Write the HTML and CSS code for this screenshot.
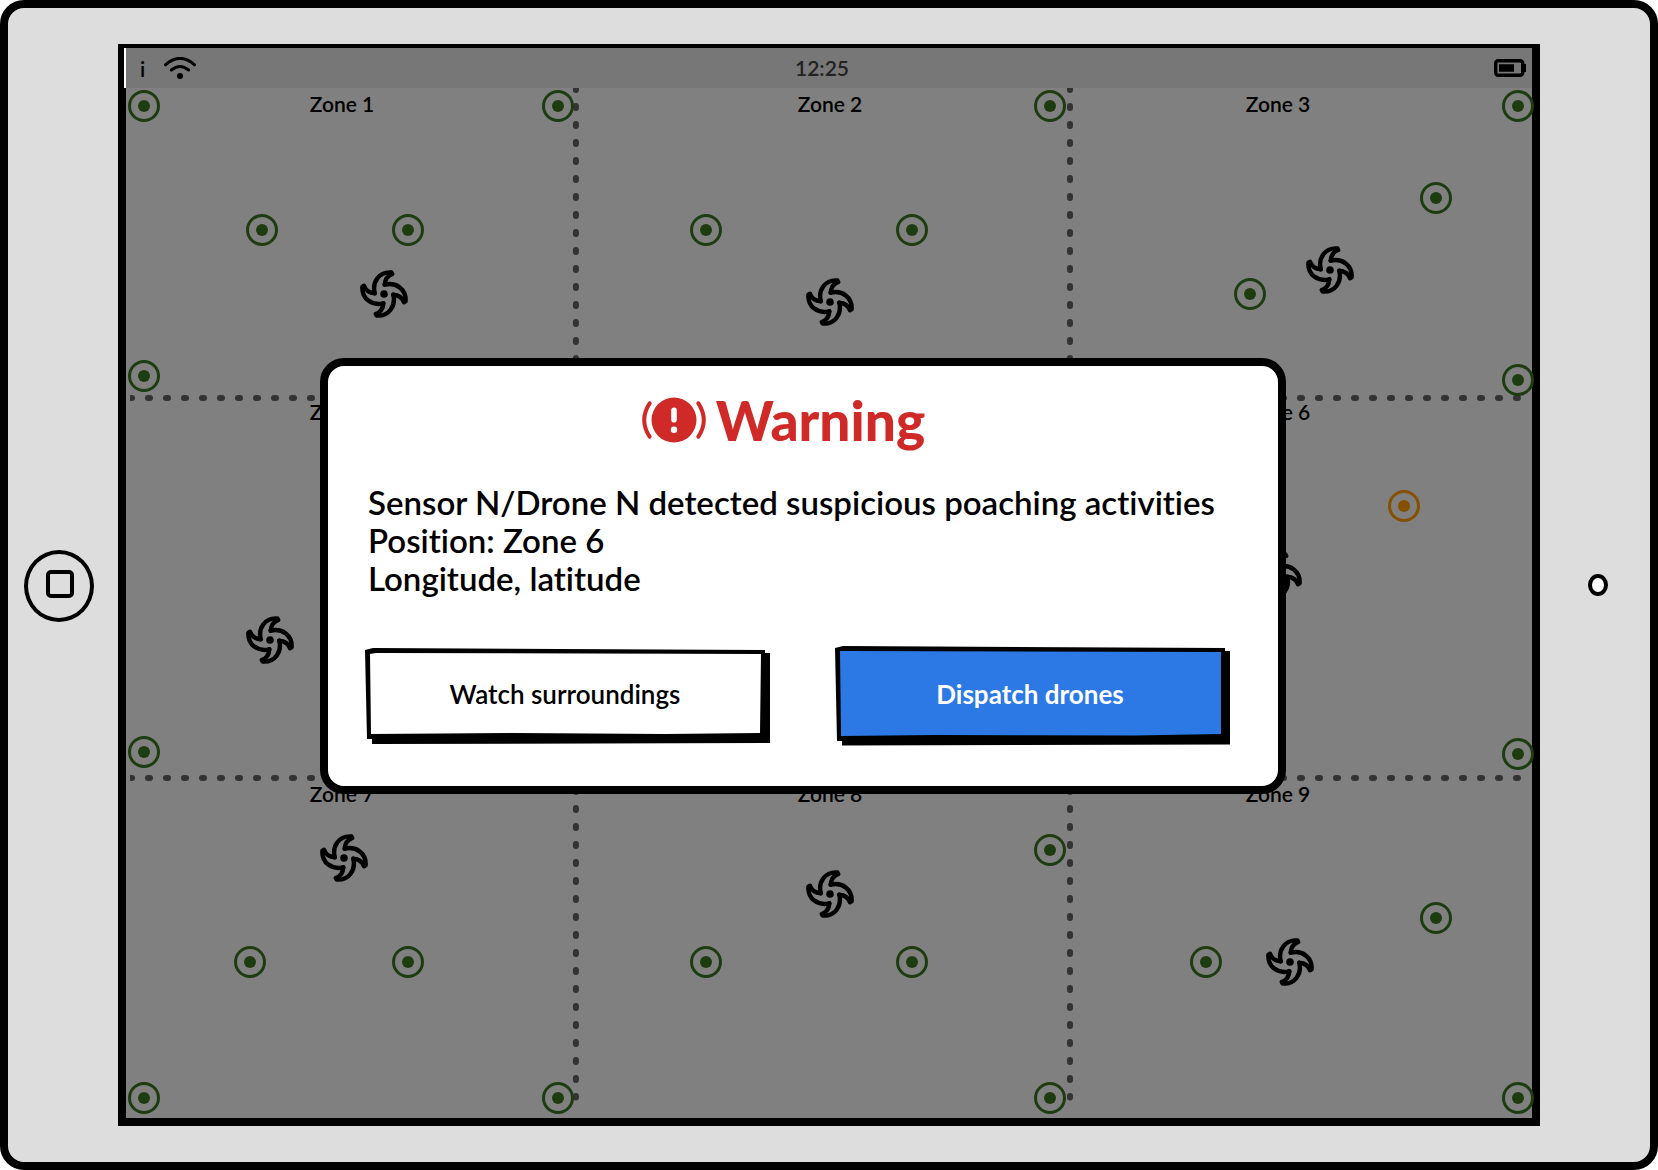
FILE: index.html
```html
<!DOCTYPE html>
<html lang="en">
<head>
<meta charset="utf-8">
<meta name="viewport" content="width=device-width, initial-scale=1">
<title>Drone monitoring – Warning</title>
<link rel="stylesheet" href="styles.css">
</head>
<body>
<svg class="symbols" aria-hidden="true">
  <symbol id="sensor" viewBox="0 0 32 32">
    <circle cx="16" cy="16" r="14.5" fill="none" stroke="currentColor" stroke-width="3"/>
    <circle cx="16" cy="16" r="6" fill="currentColor"/>
  </symbol>
  <symbol id="drone" viewBox="-24 -24 48 48">
    <g fill="none" stroke="currentColor" stroke-width="4.4" stroke-linecap="round" stroke-linejoin="round">
      <path id="blade" d="M.7-9.3C12-12 22.5-5 21.6 7.4L20 8.2C18 3 15 1 9.3.7"/>
      <use href="#blade" transform="rotate(90)"/>
      <use href="#blade" transform="rotate(180)"/>
      <use href="#blade" transform="rotate(270)"/>
    </g>
    <circle r="3.8" fill="currentColor"/>
  </symbol>
</svg>

<div class="tablet">
  <div class="bezel">
    <button class="home" type="button" aria-label="Home"><span class="home-square"></span></button>
  </div>

  <div class="screen">
    <header class="status">
      <div class="status-left">
        <span>i</span>
        <svg class="wifi" viewBox="0 0 32 22" aria-hidden="true">
          <path d="M1.5 7.8Q16-5 30.5 7.8M7.4 13Q16 6 24.6 13" fill="none" stroke="currentColor" stroke-width="3" stroke-linecap="round"/>
          <circle cx="16" cy="19" r="3" fill="currentColor"/>
        </svg>
      </div>
      <time class="clock">12:25</time>
      <svg class="battery" viewBox="0 0 32 18" aria-hidden="true">
        <rect x="1.7" y="1.7" width="27" height="14.6" rx="2.5" fill="none" stroke="currentColor" stroke-width="3.4"/>
        <path d="M5 5.3h15v7.4H5zM30 5h2v8h-2z" fill="currentColor"/>
      </svg>
    </header>

    <main class="map">
      <section class="zone zone-left">Zone 1</section>
      <section class="zone zone-mid">Zone 2</section>
      <section class="zone zone-right">Zone 3</section>
      <section class="zone zone-left zone-center-row">Zone 4</section>
      <section class="zone zone-mid zone-center-row"></section>
      <section class="zone zone-right zone-center-row">Zone 6</section>
      <section class="zone zone-left">Zone 7</section>
      <section class="zone zone-mid">Zone 8</section>
      <section class="zone zone-right">Zone 9</section>

      <svg class="dividers" aria-hidden="true">
        <line x1="32%" y1="0" x2="32%" y2="98%"/>
        <line x1="67.14%" y1="0" x2="67.14%" y2="98%"/>
        <line x1="4" y1="30.1%" x2="99%" y2="30.1%"/>
        <line x1="4" y1="67%" x2="99%" y2="67%"/>
      </svg>

      <svg class="sensor" style="--x:18;--y:18"><use href="#sensor"/></svg>
      <svg class="sensor" style="--x:432;--y:18"><use href="#sensor"/></svg>
      <svg class="sensor" style="--x:924;--y:18"><use href="#sensor"/></svg>
      <svg class="sensor" style="--x:1392;--y:18"><use href="#sensor"/></svg>
      <svg class="sensor" style="--x:136;--y:142"><use href="#sensor"/></svg>
      <svg class="sensor" style="--x:282;--y:142"><use href="#sensor"/></svg>
      <svg class="sensor" style="--x:580;--y:142"><use href="#sensor"/></svg>
      <svg class="sensor" style="--x:786;--y:142"><use href="#sensor"/></svg>
      <svg class="sensor" style="--x:1310;--y:110"><use href="#sensor"/></svg>
      <svg class="sensor" style="--x:1124;--y:206"><use href="#sensor"/></svg>
      <svg class="sensor" style="--x:18;--y:288"><use href="#sensor"/></svg>
      <svg class="sensor" style="--x:1392;--y:292"><use href="#sensor"/></svg>
      <svg class="sensor alert" style="--x:1278;--y:418"><use href="#sensor"/></svg>
      <svg class="sensor" style="--x:18;--y:664"><use href="#sensor"/></svg>
      <svg class="sensor" style="--x:1392;--y:666"><use href="#sensor"/></svg>
      <svg class="sensor" style="--x:924;--y:762"><use href="#sensor"/></svg>
      <svg class="sensor" style="--x:124;--y:874"><use href="#sensor"/></svg>
      <svg class="sensor" style="--x:282;--y:874"><use href="#sensor"/></svg>
      <svg class="sensor" style="--x:580;--y:874"><use href="#sensor"/></svg>
      <svg class="sensor" style="--x:786;--y:874"><use href="#sensor"/></svg>
      <svg class="sensor" style="--x:1080;--y:874"><use href="#sensor"/></svg>
      <svg class="sensor" style="--x:1310;--y:830"><use href="#sensor"/></svg>
      <svg class="sensor" style="--x:18;--y:1010"><use href="#sensor"/></svg>
      <svg class="sensor" style="--x:432;--y:1010"><use href="#sensor"/></svg>
      <svg class="sensor" style="--x:924;--y:1010"><use href="#sensor"/></svg>
      <svg class="sensor" style="--x:1392;--y:1010"><use href="#sensor"/></svg>

      <svg class="drone" style="--x:258;--y:206"><use href="#drone"/></svg>
      <svg class="drone" style="--x:704;--y:214"><use href="#drone"/></svg>
      <svg class="drone" style="--x:1204;--y:182"><use href="#drone"/></svg>
      <svg class="drone" style="--x:144;--y:552"><use href="#drone"/></svg>
      <svg class="drone" style="--x:1152;--y:488"><use href="#drone"/></svg>
      <svg class="drone" style="--x:218;--y:770"><use href="#drone"/></svg>
      <svg class="drone" style="--x:704;--y:806"><use href="#drone"/></svg>
      <svg class="drone" style="--x:1164;--y:874"><use href="#drone"/></svg>
    </main>

    <div class="overlay">
      <div class="dialog" role="alertdialog" aria-modal="true" aria-labelledby="dialog-title" aria-describedby="dialog-text">
        <h1 class="dialog-title" id="dialog-title">
          <svg class="warning-icon" viewBox="0 0 64 46" aria-hidden="true">
            <circle cx="32" cy="23" r="22.5" fill="currentColor"/>
            <path d="M7.6 6.3Q-3.2 23 7.6 39.7M56.4 6.3Q67.2 23 56.4 39.7" fill="none" stroke="currentColor" stroke-width="4" stroke-linecap="round"/>
            <path d="M32 13.2v9.6" stroke="#fff" stroke-width="5.6" stroke-linecap="round"/>
            <circle cx="32" cy="32.8" r="3.2" fill="#fff"/>
          </svg>
          Warning
        </h1>
        <p class="dialog-text" id="dialog-text">Sensor N/Drone N detected suspicious poaching activities<br>Position: Zone 6<br>Longitude, latitude</p>
        <div class="actions">
          <button class="action" type="button">
            <svg class="sketch" viewBox="0 0 405 98" preserveAspectRatio="none" aria-hidden="true">
              <path d="M0 3L8 1L400 3V6H405V96L7 97V92H2Z" fill="#000"/>
              <path d="M5 7L11 6L396 7L395 86L300 87L150 86L6 87Z" fill="#fff"/>
            </svg>
            <span>Watch surroundings</span>
          </button>
          <button class="action primary" type="button">
            <svg class="sketch" viewBox="0 0 395 98" preserveAspectRatio="none" aria-hidden="true">
              <path d="M0 1L8 -1L390 1V4H395V97.500L7 98.500V94H2Z" fill="#000"/>
              <path d="M5 4L12 4L386 5V87L300 88.500L100 88L6 89Z" fill="#2c78e4"/>
            </svg>
            <span>Dispatch drones</span>
          </button>
        </div>
      </div>
    </div>
  </div>

  <div class="bezel">
    <span class="camera"></span>
  </div>
</div>
</body>
</html>
```

FILE: styles.css
```css
* {
  box-sizing: border-box;
}

body {
  margin: 0;
  background: #fff;
  color: #000;
  font-family: Lato, "Liberation Sans", sans-serif;
  font-weight: 600;
  font-variant-ligatures: none;
}

.symbols {
  position: absolute;
  width: 0;
  height: 0;
}

.tablet {
  display: grid;
  grid-template-columns: 110px 1fr 110px;
  min-height: 100vh;
  padding: 36px 0;
  border: 8px solid #000;
  border-radius: 24px;
  background: #ddd;
}

.bezel {
  display: flex;
  align-items: center;
  justify-content: center;
  padding: 2px 8px 0 0;
}

.bezel:last-child {
  padding: 0 0 0 6px;
}

.home {
  display: flex;
  align-items: center;
  justify-content: center;
  width: 70px;
  height: 72px;
  padding: 0 0 4px 2px;
  border: 4px solid #000;
  border-radius: 50%;
  background: none;
}

.home-square {
  width: 28px;
  height: 28px;
  border: 4px solid #000;
  border-radius: 5px;
}

.camera {
  width: 20px;
  height: 22px;
  border: 4px solid #000;
  border-radius: 50%;
  background: #fff;
}

.screen {
  position: relative;
  display: flex;
  flex-direction: column;
  border: 8px solid #000;
  border-top-width: 4px;
  background: #808080;
}

.status {
  display: grid;
  grid-template-columns: 1fr auto 1fr;
  align-items: center;
  height: 40px;
  margin-left: -2px;
  padding: 0 6px 0 14px;
  border-left: 2px solid #fff;
  background: #777;
  font-size: 21px;
}

.status-left {
  display: flex;
  align-items: center;
  gap: 19px;
}

.wifi {
  width: 32px;
  height: 22px;
}

.clock {
  padding: 0 22px 2px 0;
  color: #222;
}

.battery {
  justify-self: end;
  width: 32px;
  height: 18px;
}

.map {
  position: relative;
  flex: 1;
  display: grid;
  grid-template-columns: 450fr 494fr 462fr;
  grid-template-rows: 310fr 380fr 340fr;
}

.zone {
  font-size: 21px;
  line-height: 32px;
  text-align: center;
}

.zone-center-row {
  line-height: 28px;
}

.zone-left {
  padding-right: 18px;
}

.zone-mid {
  padding-left: 14px;
}

.zone-right {
  padding-right: 46px;
}

.dividers {
  position: absolute;
  inset: 0;
  width: 100%;
  height: 100%;
  clip-path: inset(0 0 0 4px);
  stroke: #333;
  stroke-width: 6px;
  stroke-linecap: round;
  stroke-dasharray: 2 16;
}

/* Pins: --x and --y are coordinates on the 1406 x 1030 survey map. */
.sensor,
.drone {
  position: absolute;
  left: calc(var(--x) / 1406 * 100%);
  top: calc(var(--y) / 1030 * 100%);
}

.sensor {
  width: 32px;
  height: 32px;
  margin: -16px 0 0 -16px;
  color: #1d3d10;
}

.sensor.alert {
  color: #855000;
}

.drone {
  width: 48px;
  height: 48px;
  margin: -24px 0 0 -24px;
}

.overlay {
  position: absolute;
  inset: 0;
  display: flex;
  align-items: flex-start;
  padding: 310px 246px 0 194px;
}

.dialog {
  flex: 1;
  padding: 22px 48px 41px 37px;
  border: 8px solid #000;
  border-radius: 24px;
  background: #fff;
}

.dialog-title {
  display: flex;
  align-items: center;
  justify-content: center;
  gap: 10px;
  margin: 0;
  padding-right: 28px;
  color: #cf2a27;
  font-size: 55px;
  font-weight: 900;
  line-height: 64px;
}

.warning-icon {
  width: 64px;
  height: 46px;
}

.dialog-text {
  margin: 31px 0 50px 3px;
  font-size: 33px;
  line-height: 38px;
}

.actions {
  display: grid;
  grid-template-columns: 405fr 395fr;
  gap: 65px;
}

.action {
  position: relative;
  height: 98px;
  padding: 0 5px 4px 0;
  border: 0;
  background: none;
  color: #000;
  font: inherit;
  font-size: 26px;
}

.action.primary {
  color: #fff;
  font-weight: 700;
}

.action span {
  position: relative;
}

.sketch {
  position: absolute;
  inset: 0;
  width: 100%;
  height: 100%;
  overflow: visible;
}
```
